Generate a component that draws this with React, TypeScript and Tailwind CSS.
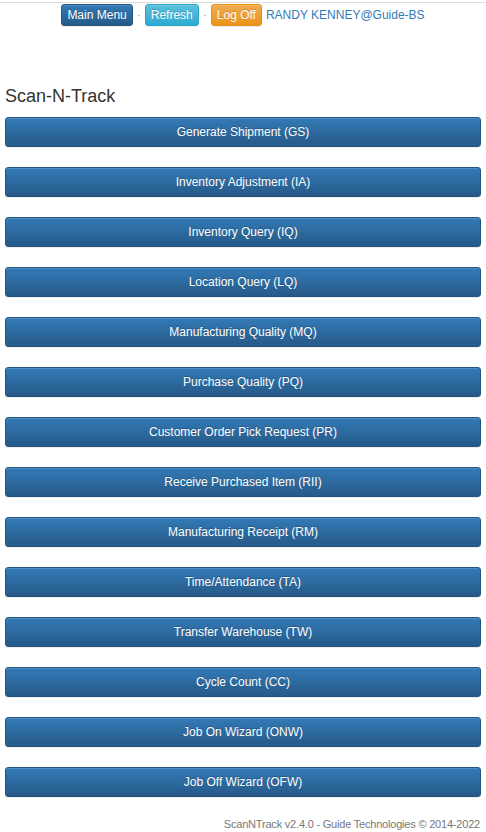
const menuItems = [
  'Generate Shipment (GS)',
  'Inventory Adjustment (IA)',
  'Inventory Query (IQ)',
  'Location Query (LQ)',
  'Manufacturing Quality (MQ)',
  'Purchase Quality (PQ)',
  'Customer Order Pick Request (PR)',
  'Receive Purchased Item (RII)',
  'Manufacturing Receipt (RM)',
  'Time/Attendance (TA)',
  'Transfer Warehouse (TW)',
  'Cycle Count (CC)',
  'Job On Wizard (ONW)',
  'Job Off Wizard (OFW)',
];

const btnXs =
  'text-[12px] leading-[18px] px-[5px] py-[1px] rounded-[3px] border text-white [text-shadow:0_-1px_0_rgba(0,0,0,0.2)] shadow-[inset_0_1px_0_rgba(255,255,255,0.15),0_1px_1px_rgba(0,0,0,0.075)]';

export default function App() {
  return (
    <div className="min-h-[832px] w-full bg-white text-[#333] font-['Liberation_Sans',Arial,sans-serif]">
      <nav className="mt-[2px] border-t border-[#ddd] flex justify-center items-center pt-[1px] text-[12px]">
        <button className={`${btnXs} bg-gradient-to-b from-[#337ab7] to-[#265a88] border-[#245580]`}>
          Main Menu
        </button>
        <span className="mx-[4px] text-[#999]">·</span>
        <button className={`${btnXs} bg-gradient-to-b from-[#5bc0de] to-[#2aabd2] border-[#28a4c9]`}>
          Refresh
        </button>
        <span className="mx-[4px] text-[#999]">·</span>
        <button className={`${btnXs} bg-gradient-to-b from-[#f0ad4e] to-[#eb9316] border-[#e38d13]`}>
          Log Off
        </button>
        <span className="ml-[4px] text-[#337ab7] leading-[18px]">RANDY KENNEY@Guide-BS</span>
      </nav>

      <main className="px-[5px] pt-[61px]">
        <h4 className="text-[18px] leading-[1.1] mb-[10px] text-[#333]">Scan-N-Track</h4>
        <div className="flex flex-col gap-[20px]">
          {menuItems.map((item) => (
            <button
              key={item}
              className="w-full h-[30px] text-[12px] leading-[18px] px-[10px] rounded-[3px] border border-[#245580] text-white bg-gradient-to-b from-[#337ab7] to-[#265a88] [text-shadow:0_-1px_0_rgba(0,0,0,0.2)] shadow-[inset_0_1px_0_rgba(255,255,255,0.15),0_1px_1px_rgba(0,0,0,0.075)]"
            >
              {item}
            </button>
          ))}
        </div>
        <footer className="text-right text-[11px] tracking-[-0.2px] text-[#777] pt-[19px] pr-[1px]">
          ScanNTrack v2.4.0 - Guide Technologies © 2014-2022
        </footer>
      </main>
    </div>
  );
}
